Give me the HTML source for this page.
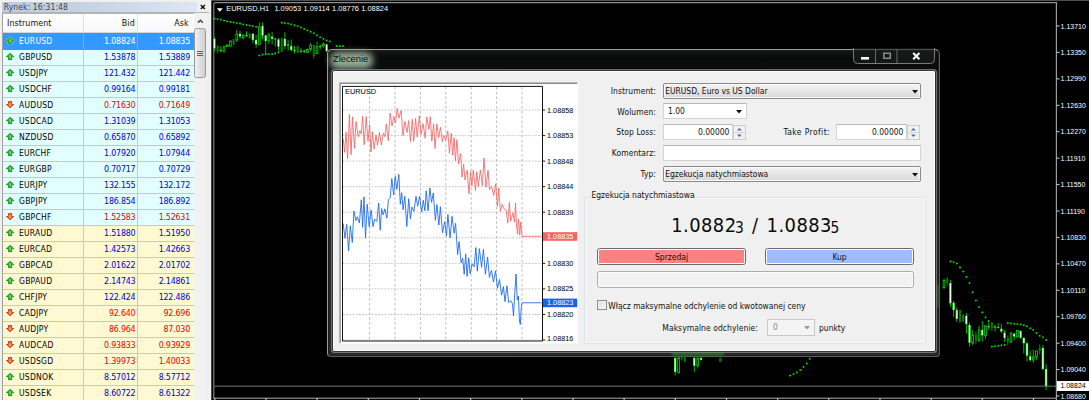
<!DOCTYPE html><html><head><meta charset="utf-8"><title>Zlecenie</title><style>html,body{margin:0;padding:0;background:#000;}
body{width:1089px;height:400px;overflow:hidden;position:relative;font-family:"DejaVu Sans Condensed","Liberation Sans",sans-serif;}
#root{position:absolute;left:0;top:0;width:1089px;height:400px;overflow:hidden;background:#000;}
#root div, #root span{box-sizing:border-box;}
/* market watch */
#mw{position:absolute;left:0;top:0;width:212px;height:400px;background:#f0f0f0;}
#mwtitle{position:absolute;left:2px;top:1.6px;width:195px;height:10.2px;background:linear-gradient(90deg,#bccbe0 0%,#c6d3e6 45%,#dde7f4 100%);font-size:8.5px;letter-spacing:0.1px;line-height:10.8px;color:#404448;padding-left:1.8px;white-space:nowrap;}
#mwx{position:absolute;left:199.4px;top:3.2px;}
#mwtable{position:absolute;left:2px;top:13px;width:192px;height:387px;background:#fff;border-left:1px solid #a0a0a0;border-top:1px solid #b4b4b4;overflow:hidden;font-size:8.8px;}
.hdr{position:absolute;left:0;top:0;width:192px;height:19px;background:linear-gradient(#ffffff,#f7f8fa);border-bottom:1px solid #d5d5d5;color:#111;}
.hdr div{position:absolute;top:0;height:18px;line-height:19.4px;border-right:1px solid #e0e0e0;}
.row{position:absolute;left:0;width:192px;height:16px;border-bottom:1px solid #c8c8c8;color:#0000e0;}
.row div{position:absolute;top:0;height:15px;line-height:15.4px;border-right:1px solid #c8c8c8;white-space:nowrap;}
.c1{left:0;width:81px;padding-left:4px;text-align:left;}
.c2{left:81px;width:54px;text-align:right;padding-right:1.6px;letter-spacing:-0.2px;}
.c3{left:135px;width:57px;text-align:right;padding-right:5px;letter-spacing:-0.2px;border-right:none !important;}
.hdr .c2{letter-spacing:0.15px;padding-right:2.2px;}.hdr .c3{letter-spacing:0.1px;padding-right:6.4px;}.hdr .c1{letter-spacing:0.1px;}
.row .c1{color:#000;}
.row .c1 span{position:absolute;left:16px;top:0;font-size:8.5px;letter-spacing:0.22px;}
.row.sel{background:#3399ff;color:#fff;border-bottom-color:#3399ff;box-shadow:0 -1px 0 #3399ff;}
.row.sel .c1{color:#fff;}
.row.sel div{border-right-color:#6ab2ff;}
.row.cy{background:#e2ffff;}
.row.ye{background:#fff9d2;}
.row.dn{color:#f00000;}
.ar{position:absolute;left:3.3px;top:3.4px;width:8.2px;height:7.2px;overflow:visible;}
/* chart */
#chart{position:absolute;left:0;top:0;width:1089px;height:400px;font-family:"Liberation Sans",sans-serif;}
#chsvg{position:absolute;left:0;top:0;}
.chtitle{position:absolute;color:#fff;font-size:7.42px;line-height:10px;white-space:pre;word-spacing:0.3px;}
.pl{position:absolute;left:1060.6px;width:28px;color:#fff;font-size:7px;line-height:9px;white-space:nowrap;}
.plbox{position:absolute;left:1057px;width:32px;height:9.5px;background:#fff;color:#000;font-size:7px;line-height:9.5px;padding-left:3.4px;white-space:nowrap;}
/* dialog */
#dlg{position:absolute;left:0;top:0;width:1089px;height:400px;font-size:8.45px;color:#111;}
#dlgframe{position:absolute;left:327px;top:48.6px;width:613px;height:308px;border-radius:5px 5px 4px 4px;background:linear-gradient(180deg,#141616 0px,#090b0b 8px,#0b0d0d 20px,#2a2a2a 24px,#2a2a2a 100%);border:1px solid #9a9a9a;border-right-color:#5c5c5c;border-bottom-color:#5c5c5c;box-shadow:inset 0 0 0 1px #1c1c1c;}
#dlgtitle{position:absolute;left:333px;top:53px;font-family:"Liberation Sans",sans-serif;font-size:9.3px;line-height:12px;color:#0a0a0a;white-space:nowrap;}
#client{position:absolute;left:333px;top:70.8px;width:602px;height:280px;background:#f0f0f0;border:1px solid #fcfcfc;box-shadow:0 0 0 0.8px #1a1a1a,0 0 0 1.7px #8e8e8e;border-radius:1px;}
.ml{position:absolute;left:547px;font-family:"Liberation Sans",sans-serif;font-size:7.3px;line-height:9px;color:#000;white-space:nowrap;}
.ml.w{color:#fff;}
.lab{position:absolute;text-align:right;line-height:12px;white-space:nowrap;letter-spacing:0.08px;}
.lab.tp{letter-spacing:0.42px;}
.lab2{position:absolute;line-height:12px;white-space:nowrap;}
.combo{position:absolute;border:1px solid #8a8a8a;border-radius:2px;background:linear-gradient(#f4f4f4,#e6e6e6 50%,#d8d8d8);box-shadow:inset 0 0 0 1px #fafafa;}
.combo span,.edit span{position:absolute;top:0;line-height:14px;white-space:nowrap;}
.combo span{left:1.2px;}
.dd{position:absolute;right:2px;top:6px;}
.edit{position:absolute;border:1px solid #d4d4d4;border-top-color:#b8b8b8;background:#fff;}
.edit.disd{background:#f4f4f4;border-color:#c8c8c8;}
.edit .dd{right:3.6px;top:6px;}
.spin{display:block;}
#grp{position:absolute;left:584px;top:196.5px;width:342px;height:147px;border:1px solid #dbe5e8;border-radius:3px;box-shadow:inset 0 0 0 1px #f8f8f8;}
.pr{position:absolute;top:211px;height:28px;line-height:28px;text-align:center;white-space:pre;color:#0a0a0a;}
.pr.big{font-size:19.9px;letter-spacing:0.45px;top:212px;}
.pr.sm{font-size:15.4px;top:213.6px;}
.btn{position:absolute;border:1px solid #6c6c6c;border-radius:2.5px;padding:1px;background:#fbfbfb;}
.btn .bi{width:100%;height:100%;text-align:center;line-height:14px;white-space:nowrap;}
.btn.dis{border-color:#adadad;}
#chk{position:absolute;left:596.5px;top:300px;width:10px;height:10px;border:1px solid #8e8e8e;background:linear-gradient(135deg,#d8d8d8,#fafafa);box-shadow:inset 0 0 0 1px #f0f0f0;}

#glow{position:absolute;left:330px;top:52px;width:43px;height:17px;border-radius:8px;background:#a4bea4;filter:blur(3.5px);opacity:0.9;}
</style></head><body>
<div id="root">
<div id="mw">
<div id="mwtitle"><span>Rynek: 16:31:48</span></div><svg id="mwx" width="8" height="8" viewBox="0 0 8 8"><path d="M1.8 1.9L5.9 5.9M5.9 1.9L1.8 5.9" stroke="#111" stroke-width="1.45"/></svg>
<div id="mwtable">
<div class="hdr"><div class="c1">Instrument</div><div class="c2">Bid</div><div class="c3">Ask</div></div>
<div class="row sel" style="top:20px"><div class="c1"><svg class="ar" viewBox="0 0 9 8"><path d="M4.5 0.4 L8.6 4.1 H6.3 V7.4 H2.7 V4.1 H0.4 Z" fill="none" stroke="#e8fbe8" stroke-width="1.5" stroke-linejoin="round"/><path d="M4.5 0.4 L8.6 4.1 H6.3 V7.4 H2.7 V4.1 H0.4 Z" fill="#25b825" stroke="#0b760b" stroke-width="0.8"/><path d="M4.5 1.8L6.6 3.8H5.4V6.4H3.8V3.8H2.4Z" fill="#5fdc5f"/></svg><span>EURUSD</span></div><div class="c2">1.08824</div><div class="c3">1.08835</div></div>
<div class="row cy" style="top:36px"><div class="c1"><svg class="ar" viewBox="0 0 9 8"><path d="M4.5 0.4 L8.6 4.1 H6.3 V7.4 H2.7 V4.1 H0.4 Z" fill="none" stroke="#e8fbe8" stroke-width="1.5" stroke-linejoin="round"/><path d="M4.5 0.4 L8.6 4.1 H6.3 V7.4 H2.7 V4.1 H0.4 Z" fill="#25b825" stroke="#0b760b" stroke-width="0.8"/><path d="M4.5 1.8L6.6 3.8H5.4V6.4H3.8V3.8H2.4Z" fill="#5fdc5f"/></svg><span>GBPUSD</span></div><div class="c2">1.53878</div><div class="c3">1.53889</div></div>
<div class="row cy" style="top:52px"><div class="c1"><svg class="ar" viewBox="0 0 9 8"><path d="M4.5 0.4 L8.6 4.1 H6.3 V7.4 H2.7 V4.1 H0.4 Z" fill="none" stroke="#e8fbe8" stroke-width="1.5" stroke-linejoin="round"/><path d="M4.5 0.4 L8.6 4.1 H6.3 V7.4 H2.7 V4.1 H0.4 Z" fill="#25b825" stroke="#0b760b" stroke-width="0.8"/><path d="M4.5 1.8L6.6 3.8H5.4V6.4H3.8V3.8H2.4Z" fill="#5fdc5f"/></svg><span>USDJPY</span></div><div class="c2">121.432</div><div class="c3">121.442</div></div>
<div class="row cy" style="top:68px"><div class="c1"><svg class="ar" viewBox="0 0 9 8"><path d="M4.5 0.4 L8.6 4.1 H6.3 V7.4 H2.7 V4.1 H0.4 Z" fill="none" stroke="#e8fbe8" stroke-width="1.5" stroke-linejoin="round"/><path d="M4.5 0.4 L8.6 4.1 H6.3 V7.4 H2.7 V4.1 H0.4 Z" fill="#25b825" stroke="#0b760b" stroke-width="0.8"/><path d="M4.5 1.8L6.6 3.8H5.4V6.4H3.8V3.8H2.4Z" fill="#5fdc5f"/></svg><span>USDCHF</span></div><div class="c2">0.99164</div><div class="c3">0.99181</div></div>
<div class="row cy dn" style="top:84px"><div class="c1"><svg class="ar" viewBox="0 0 9 8" style="transform:rotate(180deg)"><path d="M4.5 0.4 L8.6 4.1 H6.3 V7.4 H2.7 V4.1 H0.4 Z" fill="none" stroke="#fff0e8" stroke-width="1.5" stroke-linejoin="round"/><path d="M4.5 0.4 L8.6 4.1 H6.3 V7.4 H2.7 V4.1 H0.4 Z" fill="#e85a2a" stroke="#a82c0c" stroke-width="0.8"/><path d="M4.5 1.8L6.6 3.8H5.4V6.4H3.8V3.8H2.4Z" fill="#ffa070"/></svg><span>AUDUSD</span></div><div class="c2">0.71630</div><div class="c3">0.71649</div></div>
<div class="row cy" style="top:100px"><div class="c1"><svg class="ar" viewBox="0 0 9 8"><path d="M4.5 0.4 L8.6 4.1 H6.3 V7.4 H2.7 V4.1 H0.4 Z" fill="none" stroke="#e8fbe8" stroke-width="1.5" stroke-linejoin="round"/><path d="M4.5 0.4 L8.6 4.1 H6.3 V7.4 H2.7 V4.1 H0.4 Z" fill="#25b825" stroke="#0b760b" stroke-width="0.8"/><path d="M4.5 1.8L6.6 3.8H5.4V6.4H3.8V3.8H2.4Z" fill="#5fdc5f"/></svg><span>USDCAD</span></div><div class="c2">1.31039</div><div class="c3">1.31053</div></div>
<div class="row cy" style="top:116px"><div class="c1"><svg class="ar" viewBox="0 0 9 8"><path d="M4.5 0.4 L8.6 4.1 H6.3 V7.4 H2.7 V4.1 H0.4 Z" fill="none" stroke="#e8fbe8" stroke-width="1.5" stroke-linejoin="round"/><path d="M4.5 0.4 L8.6 4.1 H6.3 V7.4 H2.7 V4.1 H0.4 Z" fill="#25b825" stroke="#0b760b" stroke-width="0.8"/><path d="M4.5 1.8L6.6 3.8H5.4V6.4H3.8V3.8H2.4Z" fill="#5fdc5f"/></svg><span>NZDUSD</span></div><div class="c2">0.65870</div><div class="c3">0.65892</div></div>
<div class="row cy" style="top:132px"><div class="c1"><svg class="ar" viewBox="0 0 9 8"><path d="M4.5 0.4 L8.6 4.1 H6.3 V7.4 H2.7 V4.1 H0.4 Z" fill="none" stroke="#e8fbe8" stroke-width="1.5" stroke-linejoin="round"/><path d="M4.5 0.4 L8.6 4.1 H6.3 V7.4 H2.7 V4.1 H0.4 Z" fill="#25b825" stroke="#0b760b" stroke-width="0.8"/><path d="M4.5 1.8L6.6 3.8H5.4V6.4H3.8V3.8H2.4Z" fill="#5fdc5f"/></svg><span>EURCHF</span></div><div class="c2">1.07920</div><div class="c3">1.07944</div></div>
<div class="row cy" style="top:148px"><div class="c1"><svg class="ar" viewBox="0 0 9 8"><path d="M4.5 0.4 L8.6 4.1 H6.3 V7.4 H2.7 V4.1 H0.4 Z" fill="none" stroke="#e8fbe8" stroke-width="1.5" stroke-linejoin="round"/><path d="M4.5 0.4 L8.6 4.1 H6.3 V7.4 H2.7 V4.1 H0.4 Z" fill="#25b825" stroke="#0b760b" stroke-width="0.8"/><path d="M4.5 1.8L6.6 3.8H5.4V6.4H3.8V3.8H2.4Z" fill="#5fdc5f"/></svg><span>EURGBP</span></div><div class="c2">0.70717</div><div class="c3">0.70729</div></div>
<div class="row cy" style="top:164px"><div class="c1"><svg class="ar" viewBox="0 0 9 8"><path d="M4.5 0.4 L8.6 4.1 H6.3 V7.4 H2.7 V4.1 H0.4 Z" fill="none" stroke="#e8fbe8" stroke-width="1.5" stroke-linejoin="round"/><path d="M4.5 0.4 L8.6 4.1 H6.3 V7.4 H2.7 V4.1 H0.4 Z" fill="#25b825" stroke="#0b760b" stroke-width="0.8"/><path d="M4.5 1.8L6.6 3.8H5.4V6.4H3.8V3.8H2.4Z" fill="#5fdc5f"/></svg><span>EURJPY</span></div><div class="c2">132.155</div><div class="c3">132.172</div></div>
<div class="row cy" style="top:180px"><div class="c1"><svg class="ar" viewBox="0 0 9 8"><path d="M4.5 0.4 L8.6 4.1 H6.3 V7.4 H2.7 V4.1 H0.4 Z" fill="none" stroke="#e8fbe8" stroke-width="1.5" stroke-linejoin="round"/><path d="M4.5 0.4 L8.6 4.1 H6.3 V7.4 H2.7 V4.1 H0.4 Z" fill="#25b825" stroke="#0b760b" stroke-width="0.8"/><path d="M4.5 1.8L6.6 3.8H5.4V6.4H3.8V3.8H2.4Z" fill="#5fdc5f"/></svg><span>GBPJPY</span></div><div class="c2">186.854</div><div class="c3">186.892</div></div>
<div class="row cy dn" style="top:196px"><div class="c1"><svg class="ar" viewBox="0 0 9 8" style="transform:rotate(180deg)"><path d="M4.5 0.4 L8.6 4.1 H6.3 V7.4 H2.7 V4.1 H0.4 Z" fill="none" stroke="#fff0e8" stroke-width="1.5" stroke-linejoin="round"/><path d="M4.5 0.4 L8.6 4.1 H6.3 V7.4 H2.7 V4.1 H0.4 Z" fill="#e85a2a" stroke="#a82c0c" stroke-width="0.8"/><path d="M4.5 1.8L6.6 3.8H5.4V6.4H3.8V3.8H2.4Z" fill="#ffa070"/></svg><span>GBPCHF</span></div><div class="c2">1.52583</div><div class="c3">1.52631</div></div>
<div class="row ye" style="top:212px"><div class="c1"><svg class="ar" viewBox="0 0 9 8"><path d="M4.5 0.4 L8.6 4.1 H6.3 V7.4 H2.7 V4.1 H0.4 Z" fill="none" stroke="#e8fbe8" stroke-width="1.5" stroke-linejoin="round"/><path d="M4.5 0.4 L8.6 4.1 H6.3 V7.4 H2.7 V4.1 H0.4 Z" fill="#25b825" stroke="#0b760b" stroke-width="0.8"/><path d="M4.5 1.8L6.6 3.8H5.4V6.4H3.8V3.8H2.4Z" fill="#5fdc5f"/></svg><span>EURAUD</span></div><div class="c2">1.51880</div><div class="c3">1.51950</div></div>
<div class="row ye" style="top:228px"><div class="c1"><svg class="ar" viewBox="0 0 9 8"><path d="M4.5 0.4 L8.6 4.1 H6.3 V7.4 H2.7 V4.1 H0.4 Z" fill="none" stroke="#e8fbe8" stroke-width="1.5" stroke-linejoin="round"/><path d="M4.5 0.4 L8.6 4.1 H6.3 V7.4 H2.7 V4.1 H0.4 Z" fill="#25b825" stroke="#0b760b" stroke-width="0.8"/><path d="M4.5 1.8L6.6 3.8H5.4V6.4H3.8V3.8H2.4Z" fill="#5fdc5f"/></svg><span>EURCAD</span></div><div class="c2">1.42573</div><div class="c3">1.42663</div></div>
<div class="row ye" style="top:244px"><div class="c1"><svg class="ar" viewBox="0 0 9 8"><path d="M4.5 0.4 L8.6 4.1 H6.3 V7.4 H2.7 V4.1 H0.4 Z" fill="none" stroke="#e8fbe8" stroke-width="1.5" stroke-linejoin="round"/><path d="M4.5 0.4 L8.6 4.1 H6.3 V7.4 H2.7 V4.1 H0.4 Z" fill="#25b825" stroke="#0b760b" stroke-width="0.8"/><path d="M4.5 1.8L6.6 3.8H5.4V6.4H3.8V3.8H2.4Z" fill="#5fdc5f"/></svg><span>GBPCAD</span></div><div class="c2">2.01622</div><div class="c3">2.01702</div></div>
<div class="row ye" style="top:260px"><div class="c1"><svg class="ar" viewBox="0 0 9 8"><path d="M4.5 0.4 L8.6 4.1 H6.3 V7.4 H2.7 V4.1 H0.4 Z" fill="none" stroke="#e8fbe8" stroke-width="1.5" stroke-linejoin="round"/><path d="M4.5 0.4 L8.6 4.1 H6.3 V7.4 H2.7 V4.1 H0.4 Z" fill="#25b825" stroke="#0b760b" stroke-width="0.8"/><path d="M4.5 1.8L6.6 3.8H5.4V6.4H3.8V3.8H2.4Z" fill="#5fdc5f"/></svg><span>GBPAUD</span></div><div class="c2">2.14743</div><div class="c3">2.14861</div></div>
<div class="row ye" style="top:276px"><div class="c1"><svg class="ar" viewBox="0 0 9 8"><path d="M4.5 0.4 L8.6 4.1 H6.3 V7.4 H2.7 V4.1 H0.4 Z" fill="none" stroke="#e8fbe8" stroke-width="1.5" stroke-linejoin="round"/><path d="M4.5 0.4 L8.6 4.1 H6.3 V7.4 H2.7 V4.1 H0.4 Z" fill="#25b825" stroke="#0b760b" stroke-width="0.8"/><path d="M4.5 1.8L6.6 3.8H5.4V6.4H3.8V3.8H2.4Z" fill="#5fdc5f"/></svg><span>CHFJPY</span></div><div class="c2">122.424</div><div class="c3">122.486</div></div>
<div class="row ye dn" style="top:292px"><div class="c1"><svg class="ar" viewBox="0 0 9 8" style="transform:rotate(180deg)"><path d="M4.5 0.4 L8.6 4.1 H6.3 V7.4 H2.7 V4.1 H0.4 Z" fill="none" stroke="#fff0e8" stroke-width="1.5" stroke-linejoin="round"/><path d="M4.5 0.4 L8.6 4.1 H6.3 V7.4 H2.7 V4.1 H0.4 Z" fill="#e85a2a" stroke="#a82c0c" stroke-width="0.8"/><path d="M4.5 1.8L6.6 3.8H5.4V6.4H3.8V3.8H2.4Z" fill="#ffa070"/></svg><span>CADJPY</span></div><div class="c2">92.640</div><div class="c3">92.696</div></div>
<div class="row ye dn" style="top:308px"><div class="c1"><svg class="ar" viewBox="0 0 9 8" style="transform:rotate(180deg)"><path d="M4.5 0.4 L8.6 4.1 H6.3 V7.4 H2.7 V4.1 H0.4 Z" fill="none" stroke="#fff0e8" stroke-width="1.5" stroke-linejoin="round"/><path d="M4.5 0.4 L8.6 4.1 H6.3 V7.4 H2.7 V4.1 H0.4 Z" fill="#e85a2a" stroke="#a82c0c" stroke-width="0.8"/><path d="M4.5 1.8L6.6 3.8H5.4V6.4H3.8V3.8H2.4Z" fill="#ffa070"/></svg><span>AUDJPY</span></div><div class="c2">86.964</div><div class="c3">87.030</div></div>
<div class="row ye dn" style="top:324px"><div class="c1"><svg class="ar" viewBox="0 0 9 8" style="transform:rotate(180deg)"><path d="M4.5 0.4 L8.6 4.1 H6.3 V7.4 H2.7 V4.1 H0.4 Z" fill="none" stroke="#fff0e8" stroke-width="1.5" stroke-linejoin="round"/><path d="M4.5 0.4 L8.6 4.1 H6.3 V7.4 H2.7 V4.1 H0.4 Z" fill="#e85a2a" stroke="#a82c0c" stroke-width="0.8"/><path d="M4.5 1.8L6.6 3.8H5.4V6.4H3.8V3.8H2.4Z" fill="#ffa070"/></svg><span>AUDCAD</span></div><div class="c2">0.93833</div><div class="c3">0.93929</div></div>
<div class="row ye dn" style="top:340px"><div class="c1"><svg class="ar" viewBox="0 0 9 8" style="transform:rotate(180deg)"><path d="M4.5 0.4 L8.6 4.1 H6.3 V7.4 H2.7 V4.1 H0.4 Z" fill="none" stroke="#fff0e8" stroke-width="1.5" stroke-linejoin="round"/><path d="M4.5 0.4 L8.6 4.1 H6.3 V7.4 H2.7 V4.1 H0.4 Z" fill="#e85a2a" stroke="#a82c0c" stroke-width="0.8"/><path d="M4.5 1.8L6.6 3.8H5.4V6.4H3.8V3.8H2.4Z" fill="#ffa070"/></svg><span>USDSGD</span></div><div class="c2">1.39973</div><div class="c3">1.40033</div></div>
<div class="row ye" style="top:356px"><div class="c1"><svg class="ar" viewBox="0 0 9 8"><path d="M4.5 0.4 L8.6 4.1 H6.3 V7.4 H2.7 V4.1 H0.4 Z" fill="none" stroke="#e8fbe8" stroke-width="1.5" stroke-linejoin="round"/><path d="M4.5 0.4 L8.6 4.1 H6.3 V7.4 H2.7 V4.1 H0.4 Z" fill="#25b825" stroke="#0b760b" stroke-width="0.8"/><path d="M4.5 1.8L6.6 3.8H5.4V6.4H3.8V3.8H2.4Z" fill="#5fdc5f"/></svg><span>USDNOK</span></div><div class="c2">8.57012</div><div class="c3">8.57712</div></div>
<div class="row ye" style="top:372px"><div class="c1"><svg class="ar" viewBox="0 0 9 8"><path d="M4.5 0.4 L8.6 4.1 H6.3 V7.4 H2.7 V4.1 H0.4 Z" fill="none" stroke="#e8fbe8" stroke-width="1.5" stroke-linejoin="round"/><path d="M4.5 0.4 L8.6 4.1 H6.3 V7.4 H2.7 V4.1 H0.4 Z" fill="#25b825" stroke="#0b760b" stroke-width="0.8"/><path d="M4.5 1.8L6.6 3.8H5.4V6.4H3.8V3.8H2.4Z" fill="#5fdc5f"/></svg><span>USDSEK</span></div><div class="c2">8.60722</div><div class="c3">8.61322</div></div>
</div>
<div style="position:absolute;left:2px;top:12.3px;width:206.5px;height:1px;background:#b4b4b4"></div><div id="sb" style="position:absolute;left:194px;top:14px;width:12px;height:386px;background:#f2f2f2;">
<svg width="12" height="386" style="position:absolute;left:0;top:0">
<path d="M4 8.6 L6.4 6.2 L8.8 8.6" fill="none" stroke="#484848" stroke-width="1.5"/>
<defs><linearGradient id="tg" x1="0" x2="1" y1="0" y2="0"><stop offset="0" stop-color="#f4f4f4"/><stop offset="0.5" stop-color="#e0e0e0"/><stop offset="1" stop-color="#cfcfcf"/></linearGradient></defs>
<rect x="0.5" y="14.6" width="11" height="49" rx="2" fill="url(#tg)" stroke="#9a9a9a"/>
<path d="M3 37.5H9M3 39.5H9M3 41.5H9" stroke="#606060" stroke-width="1"/>
</svg>
</div>

</div>
<div id="chart">
<svg id="chsvg" width="1089" height="400" viewBox="0 0 1089 400">
<rect x="211.3" y="0" width="878" height="400" fill="#000"/>
<rect x="211" y="0" width="878" height="0.9" fill="#585858"/>
<path d="M213.8 398.2V4.2Q213.8 2.6 215.4 2.6H1056.4" fill="none" stroke="#8a8a8a" stroke-width="1.1"/>
<path d="M213.3 398.2H1056.5" stroke="#b0b0b0" stroke-width="1"/>
<path d="M1056.4 2.1V400" stroke="#9c9c9c" stroke-width="1.2"/>
<path d="M1033.5 398V400M982.3 398V400M931.2 398V400M880.0 398V400M828.8 398V400M777.7 398V400M726.5 398V400M675.3 398V400M624.1 398V400M573.0 398V400M521.8 398V400M470.6 398V400M419.5 398V400M368.3 398V400M317.1 398V400M266.0 398V400M214.8 398V400" stroke="#c0c0c0" stroke-width="1.2"/>
<path d="M1056.5 26.0h3M1056.5 52.4h3M1056.5 78.9h3M1056.5 105.3h3M1056.5 131.7h3M1056.5 158.2h3M1056.5 184.6h3M1056.5 211.0h3M1056.5 237.4h3M1056.5 263.9h3M1056.5 290.3h3M1056.5 316.7h3M1056.5 343.2h3M1056.5 369.6h3M1056.5 396.0h3" stroke="#d0d0d0" stroke-width="1"/>
<path d="M214.5 386.2H1056" stroke="#6a7684" stroke-width="1"/>
<path d="M944.0 279.0V289.0" stroke="#00c800" stroke-width="0.9"/><rect x="943.1" y="280.6" width="1.8" height="7.0" fill="#001000" stroke="#00d800" stroke-width="0.8"/>
<path d="M947.2 277.0V286.0" stroke="#00a000" stroke-width="0.9"/><rect x="946.2" y="279.0" width="2.0" height="4.0" fill="#008000"/>
<path d="M950.4 280.0V306.7" stroke="#00d000" stroke-width="0.9"/><rect x="949.2" y="283.0" width="2.4" height="20.4" fill="#22e022"/><rect x="949.8" y="283.3" width="1.2" height="19.8" fill="#dcffdc"/>
<path d="M953.6 301.0V317.0" stroke="#00d000" stroke-width="0.9"/><rect x="952.4" y="302.8" width="2.4" height="7.2" fill="#22e022"/><rect x="953.0" y="303.1" width="1.2" height="6.6" fill="#dcffdc"/>
<path d="M956.8 307.3V322.0" stroke="#00d000" stroke-width="0.9"/><rect x="955.6" y="310.0" width="2.4" height="9.0" fill="#22e022"/><rect x="956.2" y="310.3" width="1.2" height="8.4" fill="#dcffdc"/>
<path d="M960.0 309.5V323.0" stroke="#00a000" stroke-width="0.9"/><rect x="959.0" y="310.0" width="2.0" height="11.4" fill="#008000"/>
<path d="M963.2 314.0V322.5" stroke="#00a000" stroke-width="0.9"/><rect x="962.2" y="315.0" width="2.0" height="6.0" fill="#008000"/>
<path d="M966.4 313.0V333.7" stroke="#00d000" stroke-width="0.9"/><rect x="965.1" y="315.7" width="2.4" height="8.3" fill="#22e022"/><rect x="965.8" y="316.0" width="1.2" height="7.7" fill="#dcffdc"/>
<path d="M969.5 322.5V346.7" stroke="#00d000" stroke-width="0.9"/><rect x="968.3" y="325.0" width="2.4" height="17.7" fill="#22e022"/><rect x="968.9" y="325.3" width="1.2" height="17.1" fill="#dcffdc"/>
<path d="M972.7 330.0V345.0" stroke="#00c800" stroke-width="0.9"/><rect x="971.8" y="335.0" width="1.8" height="8.0" fill="#001000" stroke="#00d800" stroke-width="0.8"/>
<path d="M975.9 331.5V344.0" stroke="#00a000" stroke-width="0.9"/><rect x="974.9" y="335.0" width="2.0" height="5.5" fill="#008000"/>
<path d="M979.1 326.0V341.6" stroke="#00c800" stroke-width="0.9"/><rect x="978.2" y="329.8" width="1.8" height="10.7" fill="#001000" stroke="#00d800" stroke-width="0.8"/>
<path d="M982.3 321.0V341.6" stroke="#00d000" stroke-width="0.9"/><rect x="981.1" y="330.0" width="2.4" height="5.4" fill="#22e022"/><rect x="981.7" y="330.3" width="1.2" height="4.8" fill="#dcffdc"/>
<path d="M985.5 325.0V339.0" stroke="#00c800" stroke-width="0.9"/><rect x="984.6" y="326.0" width="1.8" height="9.4" fill="#001000" stroke="#00d800" stroke-width="0.8"/>
<path d="M988.7 322.5V329.8" stroke="#00d000" stroke-width="0.9"/><rect x="987.5" y="326.0" width="2.4" height="0.9" fill="#22e022"/><rect x="988.1" y="326.3" width="1.2" height="0.3" fill="#dcffdc"/>
<path d="M991.9 322.0V331.0" stroke="#00a000" stroke-width="0.9"/><rect x="990.9" y="322.5" width="2.0" height="5.5" fill="#008000"/>
<path d="M995.1 325.0V331.5" stroke="#00d000" stroke-width="0.9"/><rect x="993.9" y="326.6" width="2.4" height="0.9" fill="#22e022"/><rect x="994.5" y="326.9" width="1.2" height="0.3" fill="#dcffdc"/>
<path d="M998.2 323.0V328.7" stroke="#00d000" stroke-width="0.9"/><rect x="997.0" y="327.0" width="2.4" height="0.9" fill="#22e022"/><rect x="997.6" y="327.3" width="1.2" height="0.3" fill="#dcffdc"/>
<path d="M1001.4 324.0V333.0" stroke="#00d000" stroke-width="0.9"/><rect x="1000.2" y="328.7" width="2.4" height="2.8" fill="#22e022"/><rect x="1000.8" y="329.0" width="1.2" height="2.2" fill="#dcffdc"/>
<path d="M1004.6 330.0V341.6" stroke="#00d000" stroke-width="0.9"/><rect x="1003.4" y="332.6" width="2.4" height="5.4" fill="#22e022"/><rect x="1004.0" y="332.9" width="1.2" height="4.8" fill="#dcffdc"/>
<path d="M1007.8 335.4V345.0" stroke="#00a000" stroke-width="0.9"/><rect x="1006.8" y="338.0" width="2.0" height="3.6" fill="#008000"/>
<path d="M1011.0 332.0V343.0" stroke="#00c800" stroke-width="0.9"/><rect x="1010.1" y="333.0" width="1.8" height="9.0" fill="#001000" stroke="#00d800" stroke-width="0.8"/>
<path d="M1014.2 333.0V340.0" stroke="#00d000" stroke-width="0.9"/><rect x="1013.0" y="333.7" width="2.4" height="2.8" fill="#22e022"/><rect x="1013.6" y="334.0" width="1.2" height="2.2" fill="#dcffdc"/>
<path d="M1017.4 329.8V337.7" stroke="#00c800" stroke-width="0.9"/><rect x="1016.5" y="330.4" width="1.8" height="6.6" fill="#001000" stroke="#00d800" stroke-width="0.8"/>
<path d="M1020.6 330.4V338.8" stroke="#00d000" stroke-width="0.9"/><rect x="1019.4" y="331.0" width="2.4" height="6.7" fill="#22e022"/><rect x="1020.0" y="331.3" width="1.2" height="6.1" fill="#dcffdc"/>
<path d="M1023.8 337.0V353.5" stroke="#00d000" stroke-width="0.9"/><rect x="1022.6" y="338.0" width="2.4" height="5.3" fill="#22e022"/><rect x="1023.2" y="338.3" width="1.2" height="4.7" fill="#dcffdc"/>
<path d="M1027.0 342.0V361.4" stroke="#00d000" stroke-width="0.9"/><rect x="1025.8" y="343.4" width="2.4" height="12.3" fill="#22e022"/><rect x="1026.4" y="343.7" width="1.2" height="11.7" fill="#dcffdc"/>
<path d="M1030.2 350.7V361.4" stroke="#00d000" stroke-width="0.9"/><rect x="1029.0" y="356.3" width="2.4" height="3.9" fill="#22e022"/><rect x="1029.6" y="356.6" width="1.2" height="3.3" fill="#dcffdc"/>
<path d="M1033.3 349.6V363.0" stroke="#00c800" stroke-width="0.9"/><rect x="1032.4" y="357.0" width="1.8" height="3.0" fill="#001000" stroke="#00d800" stroke-width="0.8"/>
<path d="M1036.5 350.7V359.7" stroke="#00c800" stroke-width="0.9"/><rect x="1035.6" y="351.0" width="1.8" height="5.3" fill="#001000" stroke="#00d800" stroke-width="0.8"/>
<path d="M1039.7 344.5V354.6" stroke="#00a000" stroke-width="0.9"/><rect x="1038.7" y="348.0" width="2.0" height="3.0" fill="#008000"/>
<path d="M1042.9 345.0V370.4" stroke="#00d000" stroke-width="0.9"/><rect x="1041.7" y="348.0" width="2.4" height="21.0" fill="#22e022"/><rect x="1042.3" y="348.3" width="1.2" height="20.4" fill="#dcffdc"/>
<path d="M1046.1 364.0V390.0" stroke="#00d000" stroke-width="0.9"/><rect x="1044.9" y="369.0" width="2.4" height="17.0" fill="#22e022"/><rect x="1045.5" y="369.3" width="1.2" height="16.4" fill="#dcffdc"/>
<path d="M949.4 261.4h2M950.4 260.4v2" stroke="#00e400" stroke-width="0.9"/>
<path d="M952.6 262.3h2M953.6 261.3v2" stroke="#00e400" stroke-width="0.9"/>
<path d="M955.8 263.5h2M956.8 262.5v2" stroke="#00e400" stroke-width="0.9"/>
<path d="M959.0 267.5h2M960.0 266.5v2" stroke="#00e400" stroke-width="0.9"/>
<path d="M962.2 271.5h2M963.2 270.5v2" stroke="#00e400" stroke-width="0.9"/>
<path d="M965.4 277.0h2M966.4 276.0v2" stroke="#00e400" stroke-width="0.9"/>
<path d="M968.5 283.0h2M969.5 282.0v2" stroke="#00e400" stroke-width="0.9"/>
<path d="M971.7 292.4h2M972.7 291.4v2" stroke="#00e400" stroke-width="0.9"/>
<path d="M974.9 300.5h2M975.9 299.5v2" stroke="#00e400" stroke-width="0.9"/>
<path d="M978.1 307.0h2M979.1 306.0v2" stroke="#00e400" stroke-width="0.9"/>
<path d="M981.3 312.4h2M982.3 311.4v2" stroke="#00e400" stroke-width="0.9"/>
<path d="M984.5 317.4h2M985.5 316.4v2" stroke="#00e400" stroke-width="0.9"/>
<path d="M987.7 321.0h2M988.7 320.0v2" stroke="#00e400" stroke-width="0.9"/>
<path d="M1006.8 323.0h2M1007.8 322.0v2" stroke="#00e400" stroke-width="0.9"/>
<path d="M1010.0 323.6h2M1011.0 322.6v2" stroke="#00e400" stroke-width="0.9"/>
<path d="M1013.2 323.8h2M1014.2 322.8v2" stroke="#00e400" stroke-width="0.9"/>
<path d="M1016.4 324.2h2M1017.4 323.2v2" stroke="#00e400" stroke-width="0.9"/>
<path d="M1019.6 324.4h2M1020.6 323.4v2" stroke="#00e400" stroke-width="0.9"/>
<path d="M1022.8 325.3h2M1023.8 324.3v2" stroke="#00e400" stroke-width="0.9"/>
<path d="M1026.0 326.4h2M1027.0 325.4v2" stroke="#00e400" stroke-width="0.9"/>
<path d="M1029.2 328.3h2M1030.2 327.3v2" stroke="#00e400" stroke-width="0.9"/>
<path d="M1032.3 330.0h2M1033.3 329.0v2" stroke="#00e400" stroke-width="0.9"/>
<path d="M1035.5 333.0h2M1036.5 332.0v2" stroke="#00e400" stroke-width="0.9"/>
<path d="M1038.7 335.8h2M1039.7 334.8v2" stroke="#00e400" stroke-width="0.9"/>
<path d="M1041.9 337.3h2M1042.9 336.3v2" stroke="#00e400" stroke-width="0.9"/>
<path d="M1045.1 340.0h2M1046.1 339.0v2" stroke="#00e400" stroke-width="0.9"/>
<path d="M990.9 346.7h2M991.9 345.7v2" stroke="#00e400" stroke-width="0.9"/>
<path d="M994.1 346.2h2M995.1 345.2v2" stroke="#00e400" stroke-width="0.9"/>
<path d="M997.2 345.8h2M998.2 344.8v2" stroke="#00e400" stroke-width="0.9"/>
<path d="M1000.4 345.3h2M1001.4 344.3v2" stroke="#00e400" stroke-width="0.9"/>
<path d="M1003.6 345.0h2M1004.6 344.0v2" stroke="#00e400" stroke-width="0.9"/>
<path d="M214.4 37.1V51.7" stroke="#00d000" stroke-width="0.9"/><rect x="213.2" y="38.8" width="2.4" height="9.6" fill="#22e022"/><rect x="213.8" y="39.1" width="1.2" height="9.0" fill="#dcffdc"/>
<path d="M217.6 45.0V53.4" stroke="#00a000" stroke-width="0.9"/><rect x="216.6" y="46.1" width="2.0" height="5.6" fill="#008000"/>
<path d="M220.8 46.1V52.3" stroke="#00d000" stroke-width="0.9"/><rect x="219.6" y="50.2" width="2.4" height="0.9" fill="#22e022"/><rect x="220.2" y="50.5" width="1.2" height="0.3" fill="#dcffdc"/>
<path d="M224.0 45.6V52.0" stroke="#00c800" stroke-width="0.9"/><rect x="223.1" y="46.7" width="1.8" height="5.1" fill="#001000" stroke="#00d800" stroke-width="0.8"/>
<path d="M227.2 44.1V47.0" stroke="#00c800" stroke-width="0.9"/><rect x="226.3" y="44.8" width="1.8" height="1.8" fill="#001000" stroke="#00d800" stroke-width="0.8"/>
<path d="M230.4 40.5V47.2" stroke="#00c800" stroke-width="0.9"/><rect x="229.5" y="41.1" width="1.8" height="5.1" fill="#001000" stroke="#00d800" stroke-width="0.8"/>
<path d="M233.6 38.8V45.0" stroke="#00a000" stroke-width="0.9"/><rect x="232.6" y="39.4" width="2.0" height="5.1" fill="#008000"/>
<path d="M236.8 29.8V42.2" stroke="#00c800" stroke-width="0.9"/><rect x="235.9" y="34.3" width="1.8" height="5.6" fill="#001000" stroke="#00d800" stroke-width="0.8"/>
<path d="M240.0 30.9V38.8" stroke="#00d000" stroke-width="0.9"/><rect x="238.8" y="33.7" width="2.4" height="2.8" fill="#22e022"/><rect x="239.4" y="34.0" width="1.2" height="2.2" fill="#dcffdc"/>
<path d="M243.2 34.3V39.4" stroke="#00c800" stroke-width="0.9"/><rect x="242.3" y="35.1" width="1.8" height="2.6" fill="#001000" stroke="#00d800" stroke-width="0.8"/>
<path d="M246.5 31.5V36.9" stroke="#00d000" stroke-width="0.9"/><rect x="245.3" y="35.1" width="2.4" height="0.9" fill="#22e022"/><rect x="245.9" y="35.4" width="1.2" height="0.3" fill="#dcffdc"/>
<path d="M249.7 33.2V38.8" stroke="#00a000" stroke-width="0.9"/><rect x="248.7" y="33.7" width="2.0" height="4.5" fill="#008000"/>
<path d="M252.9 33.2V43.3" stroke="#00d000" stroke-width="0.9"/><rect x="251.7" y="33.7" width="2.4" height="6.2" fill="#22e022"/><rect x="252.3" y="34.0" width="1.2" height="5.6" fill="#dcffdc"/>
<path d="M256.1 34.9V47.8" stroke="#00d000" stroke-width="0.9"/><rect x="254.9" y="39.9" width="2.4" height="4.5" fill="#22e022"/><rect x="255.5" y="40.2" width="1.2" height="3.9" fill="#dcffdc"/>
<path d="M259.3 22.5V45.0" stroke="#00c800" stroke-width="0.9"/><rect x="258.4" y="27.0" width="1.8" height="17.4" fill="#001000" stroke="#00d800" stroke-width="0.8"/>
<path d="M262.5 22.5V39.4" stroke="#00d000" stroke-width="0.9"/><rect x="261.3" y="25.9" width="2.4" height="9.6" fill="#22e022"/><rect x="261.9" y="26.2" width="1.2" height="9.0" fill="#dcffdc"/>
<path d="M265.7 34.9V55.1" stroke="#00d000" stroke-width="0.9"/><rect x="264.5" y="35.4" width="2.4" height="5.6" fill="#22e022"/><rect x="265.1" y="35.7" width="1.2" height="5.0" fill="#dcffdc"/>
<path d="M268.9 32.6V44.4" stroke="#00c800" stroke-width="0.9"/><rect x="268.0" y="34.9" width="1.8" height="6.2" fill="#001000" stroke="#00d800" stroke-width="0.8"/>
<path d="M272.1 32.1V44.4" stroke="#00d000" stroke-width="0.9"/><rect x="270.9" y="36.6" width="2.4" height="2.2" fill="#22e022"/><rect x="271.5" y="36.9" width="1.2" height="1.6" fill="#dcffdc"/>
<path d="M275.3 38.2V46.7" stroke="#00d000" stroke-width="0.9"/><rect x="274.1" y="38.5" width="2.4" height="0.9" fill="#22e022"/><rect x="274.7" y="38.8" width="1.2" height="0.3" fill="#dcffdc"/>
<path d="M278.5 38.2V50.6" stroke="#00d000" stroke-width="0.9"/><rect x="277.3" y="39.4" width="2.4" height="7.3" fill="#22e022"/><rect x="277.9" y="39.7" width="1.2" height="6.7" fill="#dcffdc"/>
<path d="M281.7 38.0V52.3" stroke="#00a000" stroke-width="0.9"/><rect x="280.7" y="38.2" width="2.0" height="13.5" fill="#008000"/>
<path d="M284.9 32.1V49.5" stroke="#00d000" stroke-width="0.9"/><rect x="283.7" y="38.8" width="2.4" height="7.3" fill="#22e022"/><rect x="284.3" y="39.1" width="1.2" height="6.7" fill="#dcffdc"/>
<path d="M288.1 39.9V50.6" stroke="#00d000" stroke-width="0.9"/><rect x="286.9" y="44.5" width="2.4" height="0.9" fill="#22e022"/><rect x="287.5" y="44.8" width="1.2" height="0.3" fill="#dcffdc"/>
<path d="M291.3 39.4V51.2" stroke="#00d000" stroke-width="0.9"/><rect x="290.1" y="46.1" width="2.4" height="3.9" fill="#22e022"/><rect x="290.7" y="46.4" width="1.2" height="3.3" fill="#dcffdc"/>
<path d="M294.5 46.1V53.4" stroke="#00d000" stroke-width="0.9"/><rect x="293.3" y="50.2" width="2.4" height="0.9" fill="#22e022"/><rect x="293.9" y="50.5" width="1.2" height="0.3" fill="#dcffdc"/>
<path d="M297.7 45.6V53.4" stroke="#00a000" stroke-width="0.9"/><rect x="296.7" y="46.1" width="2.0" height="6.7" fill="#008000"/>
<path d="M301.0 47.8V52.9" stroke="#00d000" stroke-width="0.9"/><rect x="299.8" y="50.7" width="2.4" height="0.9" fill="#22e022"/><rect x="300.4" y="51.0" width="1.2" height="0.3" fill="#dcffdc"/>
<path d="M304.2 49.5V53.4" stroke="#00d000" stroke-width="0.9"/><rect x="303.0" y="50.7" width="2.4" height="0.9" fill="#22e022"/><rect x="303.6" y="51.0" width="1.2" height="0.3" fill="#dcffdc"/>
<path d="M307.4 48.4V52.9" stroke="#00c800" stroke-width="0.9"/><rect x="306.5" y="49.5" width="1.8" height="2.8" fill="#001000" stroke="#00d800" stroke-width="0.8"/>
<path d="M310.6 43.3V51.2" stroke="#00c800" stroke-width="0.9"/><rect x="309.7" y="45.6" width="1.8" height="3.4" fill="#001000" stroke="#00d800" stroke-width="0.8"/>
<path d="M313.8 44.8V58.5" stroke="#00a000" stroke-width="0.9"/><rect x="312.8" y="45.0" width="2.0" height="11.2" fill="#008000"/>
<path d="M317.0 41.6V54.0" stroke="#00c800" stroke-width="0.9"/><rect x="316.1" y="46.7" width="1.8" height="6.7" fill="#001000" stroke="#00d800" stroke-width="0.8"/>
<path d="M320.2 44.4V49.5" stroke="#00d000" stroke-width="0.9"/><rect x="319.0" y="46.2" width="2.4" height="0.9" fill="#22e022"/><rect x="319.6" y="46.5" width="1.2" height="0.3" fill="#dcffdc"/>
<path d="M323.4 42.2V47.8" stroke="#00c800" stroke-width="0.9"/><rect x="322.5" y="43.9" width="1.8" height="2.2" fill="#001000" stroke="#00d800" stroke-width="0.8"/>
<path d="M326.6 43.9V52.3" stroke="#00d000" stroke-width="0.9"/><rect x="325.4" y="44.4" width="2.4" height="6.7" fill="#22e022"/><rect x="326.0" y="44.7" width="1.2" height="6.1" fill="#dcffdc"/>
<path d="M675.2 357.0V375.4" stroke="#00d000" stroke-width="0.9"/><rect x="674.0" y="358.0" width="2.4" height="14.0" fill="#22e022"/><rect x="674.6" y="358.3" width="1.2" height="13.4" fill="#dcffdc"/>
<path d="M678.6 357.0V373.5" stroke="#00c800" stroke-width="0.9"/><rect x="677.7" y="358.0" width="1.8" height="14.6" fill="#001000" stroke="#00d800" stroke-width="0.8"/>
<path d="M681.6 357.0V360.5" stroke="#00a000" stroke-width="0.9"/><rect x="680.6" y="357.5" width="2.0" height="1.5" fill="#008000"/>
<path d="M684.7 357.0V362.0" stroke="#00a000" stroke-width="0.9"/><rect x="683.7" y="357.5" width="2.0" height="4.0" fill="#008000"/>
<path d="M694.3 357.0V372.0" stroke="#00d000" stroke-width="0.9"/><rect x="693.1" y="358.0" width="2.4" height="7.8" fill="#22e022"/><rect x="693.7" y="358.3" width="1.2" height="7.2" fill="#dcffdc"/>
<path d="M697.7 357.0V368.6" stroke="#00c800" stroke-width="0.9"/><rect x="696.8" y="358.5" width="1.8" height="7.3" fill="#001000" stroke="#00d800" stroke-width="0.8"/>
<path d="M701.0 357.0V360.5" stroke="#00d000" stroke-width="0.9"/><rect x="699.8" y="358.0" width="2.4" height="2.0" fill="#22e022"/><rect x="700.4" y="358.3" width="1.2" height="1.4" fill="#dcffdc"/>
<path d="M720.2 357.5V362.0" stroke="#00a000" stroke-width="0.9"/><rect x="719.2" y="358.5" width="2.0" height="3.5" fill="#008000"/>
<path d="M213.4 18.6h2M214.4 17.6v2" stroke="#00e400" stroke-width="0.9"/>
<path d="M216.6 19.1h2M217.6 18.1v2" stroke="#00e400" stroke-width="0.9"/>
<path d="M219.8 19.7h2M220.8 18.7v2" stroke="#00e400" stroke-width="0.9"/>
<path d="M223.0 20.5h2M224.0 19.5v2" stroke="#00e400" stroke-width="0.9"/>
<path d="M226.2 21.4h2M227.2 20.4v2" stroke="#00e400" stroke-width="0.9"/>
<path d="M229.4 21.9h2M230.4 20.9v2" stroke="#00e400" stroke-width="0.9"/>
<path d="M232.6 22.5h2M233.6 21.5v2" stroke="#00e400" stroke-width="0.9"/>
<path d="M235.8 23.1h2M236.8 22.1v2" stroke="#00e400" stroke-width="0.9"/>
<path d="M239.0 23.6h2M240.0 22.6v2" stroke="#00e400" stroke-width="0.9"/>
<path d="M242.2 24.4h2M243.2 23.4v2" stroke="#00e400" stroke-width="0.9"/>
<path d="M245.5 25.0h2M246.5 24.0v2" stroke="#00e400" stroke-width="0.9"/>
<path d="M248.7 25.5h2M249.7 24.5v2" stroke="#00e400" stroke-width="0.9"/>
<path d="M251.9 26.1h2M252.9 25.1v2" stroke="#00e400" stroke-width="0.9"/>
<path d="M255.1 26.8h2M256.1 25.8v2" stroke="#00e400" stroke-width="0.9"/>
<path d="M280.7 22.7h2M281.7 21.7v2" stroke="#00e400" stroke-width="0.9"/>
<path d="M283.9 23.1h2M284.9 22.1v2" stroke="#00e400" stroke-width="0.9"/>
<path d="M287.1 23.6h2M288.1 22.6v2" stroke="#00e400" stroke-width="0.9"/>
<path d="M290.3 24.4h2M291.3 23.4v2" stroke="#00e400" stroke-width="0.9"/>
<path d="M293.5 25.3h2M294.5 24.3v2" stroke="#00e400" stroke-width="0.9"/>
<path d="M296.7 26.1h2M297.7 25.1v2" stroke="#00e400" stroke-width="0.9"/>
<path d="M300.0 27.6h2M301.0 26.6v2" stroke="#00e400" stroke-width="0.9"/>
<path d="M303.2 29.0h2M304.2 28.0v2" stroke="#00e400" stroke-width="0.9"/>
<path d="M306.4 30.4h2M307.4 29.4v2" stroke="#00e400" stroke-width="0.9"/>
<path d="M309.6 31.7h2M310.6 30.7v2" stroke="#00e400" stroke-width="0.9"/>
<path d="M312.8 33.2h2M313.8 32.2v2" stroke="#00e400" stroke-width="0.9"/>
<path d="M316.0 35.4h2M317.0 34.4v2" stroke="#00e400" stroke-width="0.9"/>
<path d="M319.2 37.3h2M320.2 36.3v2" stroke="#00e400" stroke-width="0.9"/>
<path d="M322.4 39.0h2M323.4 38.0v2" stroke="#00e400" stroke-width="0.9"/>
<path d="M325.6 40.5h2M326.6 39.5v2" stroke="#00e400" stroke-width="0.9"/>
<path d="M328.8 41.4h2M329.8 40.4v2" stroke="#00e400" stroke-width="0.9"/>
<path d="M258.3 55.5h2M259.3 54.5v2" stroke="#00e400" stroke-width="0.9"/>
<path d="M261.5 54.6h2M262.5 53.6v2" stroke="#00e400" stroke-width="0.9"/>
<path d="M264.7 54.2h2M265.7 53.2v2" stroke="#00e400" stroke-width="0.9"/>
<path d="M267.9 54.2h2M268.9 53.2v2" stroke="#00e400" stroke-width="0.9"/>
<path d="M271.1 54.0h2M272.1 53.0v2" stroke="#00e400" stroke-width="0.9"/>
<path d="M274.3 53.4h2M275.3 52.4v2" stroke="#00e400" stroke-width="0.9"/>
<path d="M277.5 52.3h2M278.5 51.3v2" stroke="#00e400" stroke-width="0.9"/>
<path d="M335.7 46.0h2M336.7 45.0v2" stroke="#00e400" stroke-width="0.9"/>
<path d="M338.8 46.0h2M339.8 45.0v2" stroke="#00e400" stroke-width="0.9"/>
<path d="M341.9 46.0h2M342.9 45.0v2" stroke="#00e400" stroke-width="0.9"/>
<path d="M789.0 375.6h2M790.0 374.6v2" stroke="#00e400" stroke-width="0.9"/>
<path d="M792.5 374.1h2M793.5 373.1v2" stroke="#00e400" stroke-width="0.9"/>
<path d="M795.8 372.4h2M796.8 371.4v2" stroke="#00e400" stroke-width="0.9"/>
<path d="M799.3 370.0h2M800.3 369.0v2" stroke="#00e400" stroke-width="0.9"/>
<path d="M802.5 367.0h2M803.5 366.0v2" stroke="#00e400" stroke-width="0.9"/>
<path d="M805.8 363.5h2M806.8 362.5v2" stroke="#00e400" stroke-width="0.9"/>
<path d="M808.7 358.8h2M809.7 357.8v2" stroke="#00e400" stroke-width="0.9"/>
<path d="M216.8 8.2H222.8L219.8 11.8Z" fill="#fff"/>
</svg>
<div class="chtitle" style="left:226.3px;top:4px">EURUSD,H1</div>
<div class="chtitle" style="left:274.4px;top:4px">1.09053 1.09114 1.08776 1.08824</div>
<div class="pl" style="top:21.5px">1.13710</div>
<div class="pl" style="top:47.9px">1.13350</div>
<div class="pl" style="top:74.4px">1.12990</div>
<div class="pl" style="top:100.8px">1.12630</div>
<div class="pl" style="top:127.2px">1.12270</div>
<div class="pl" style="top:153.7px">1.11910</div>
<div class="pl" style="top:180.1px">1.11550</div>
<div class="pl" style="top:206.5px">1.11190</div>
<div class="pl" style="top:232.9px">1.10830</div>
<div class="pl" style="top:259.4px">1.10470</div>
<div class="pl" style="top:285.8px">1.10110</div>
<div class="pl" style="top:312.2px">1.09760</div>
<div class="pl" style="top:338.7px">1.09400</div>
<div class="pl" style="top:365.1px">1.09040</div>
<div class="pl" style="top:391.5px">1.08680</div>
<div class="plbox" style="top:381.2px">1.08824</div>
</div>
<div id="dlg">
<div id="dlgframe"></div>
<div id="glow"></div>
<div id="dlgtitle">Zlecenie</div>
<svg id="capbtn" width="84" height="18" viewBox="0 0 84 18" style="position:absolute;left:853px;top:48px"><path d="M0.5 0V11.5Q0.5 15.5 4.5 15.5H77.5Q81.5 15.5 81.5 11.5V0" fill="#1e1e1e" fill-opacity="0.6" stroke="#7a7a7a" stroke-width="1"/><path d="M22.5 1V15M44 1V15" stroke="#6a6a6a" stroke-width="1"/><rect x="8" y="9" width="8" height="2.6" fill="#fff"/><rect x="30.8" y="5.3" width="6.5" height="5" fill="none" stroke="#8a8a8a" stroke-width="1.5"/><path d="M60.2 5L66.4 11.2M66.4 5L60.2 11.2" stroke="#fff" stroke-width="2"/></svg>
<div style="position:absolute;left:672px;top:352px;width:52px;height:3.6px;background:#2a7a2a;filter:blur(1.2px);opacity:0.75"></div>
<div style="position:absolute;left:936px;top:284px;width:3.4px;height:24px;background:#2a7a2a;filter:blur(1.2px);opacity:0.6"></div>
<div id="client">
</div>
<svg id="mini" width="242" height="265" viewBox="0 0 242 265" style="position:absolute;left:338px;top:81px;overflow:visible">
<rect x="1" y="1.1" width="238.8" height="261.4" fill="#fff"/>
<path d="M1.4 262.5V1.5H239.8" fill="none" stroke="#bdbdbd" stroke-width="0.9"/>
<path d="M2.25 262V2.4H239.5" fill="none" stroke="#6e6e6e" stroke-width="0.9"/>
<path d="M239.9 1.5V262.6H1.4" fill="none" stroke="#fafafa" stroke-width="0.9"/>
<path d="M184.0 6V260M158.6 6V260M133.2 6V260M107.8 6V260M82.4 6V260M57.0 6V260M31.6 6V260" stroke="#b8b8b8" stroke-width="1" stroke-dasharray="2.4 2.4" fill="none"/>
<path d="M5 29.0H204.5M5 54.6H204.5M5 80.1H204.5M5 105.7H204.5M5 131.2H204.5M5 156.8H204.5M5 182.4H204.5M5 207.9H204.5M5 233.5H204.5M5 259.0H204.5" stroke="#c0c0c0" stroke-width="1" stroke-dasharray="1.6 1.6" fill="none"/>
<g transform="translate(2 2)"><path d="M3.2 55.8 L4.6 69.3 L6.0 48.9 L7.6 75.6 L9.4 31.3 L11.1 71.7 L12.5 33.9 L14.5 65.4 L16.0 38.5 L18.2 53.7 L19.8 47.5 L21.2 51.0 L22.7 33.3 L24.1 61.7 L26.2 33.6 L28.0 58.2 L29.6 41.4 L31.0 69.1 L32.5 48.8 L34.1 66.2 L36.0 51.9 L37.5 62.4 L39.5 49.5 L41.3 61.9 L43.4 49.9 L44.9 53.8 L46.3 40.9 L48.3 57.7 L50.1 30.0 L52.0 42.9 L53.8 33.6 L55.4 40.0 L57.2 25.4 L58.9 35.2 L61.1 27.5 L63.0 52.6 L64.9 38.4 L67.1 49.5 L68.6 37.7 L70.5 58.7 L72.3 36.3 L73.7 58.3 L75.6 35.2 L77.2 54.1 L79.3 32.8 L81.0 51.5 L83.1 40.6 L85.1 55.2 L86.8 33.9 L88.9 46.4 L90.3 33.7 L91.8 58.2 L93.6 40.8 L95.1 65.5 L96.8 40.8 L98.6 54.5 L100.5 44.3 L102.4 58.7 L103.7 52.4 L105.7 57.3 L107.8 47.9 L109.4 70.2 L111.3 50.1 L112.6 72.2 L114.1 54.6 L115.4 77.8 L116.9 56.6 L118.5 81.1 L120.6 70.5 L122.0 94.0 L123.6 81.1 L125.0 97.0 L127.2 87.1 L129.0 110.9 L130.4 88.5 L131.9 102.6 L133.3 87.0 L135.5 107.5 L136.9 88.6 L138.3 103.6 L140.4 86.9 L142.4 102.6 L144.0 75.0 L146.0 104.2 L148.0 87.1 L149.5 106.6 L151.7 103.6 L153.7 112.6 L155.7 100.7 L157.4 123.5 L158.8 105.0 L160.3 128.4 L162.2 121.3 L163.9 125.7 L166.1 127.1 L167.8 140.0 L169.3 119.5 L170.7 138.2 L172.9 129.9 L174.5 139.0 L175.5 120.0 L176.5 142.0 L177.5 151.0 L178.5 136.0 L179.7 152.0 L180.8 139.0 L182.0 153.3 L201.5 153.3" fill="none" stroke="#f66464" stroke-width="0.85" stroke-linejoin="round"/></g>
<g transform="translate(2 2)"><path d="M3.2 140.5 L5.0 155.3 L6.7 141.4 L8.6 167.9 L10.3 142.9 L12.3 159.5 L13.9 128.0 L15.9 137.6 L17.3 133.7 L19.4 139.9 L21.3 116.8 L22.6 144.3 L24.0 113.9 L25.5 154.9 L27.2 121.3 L29.2 143.7 L31.1 127.0 L33.0 143.7 L34.6 136.3 L36.8 138.3 L38.7 120.0 L40.2 147.3 L41.6 125.6 L43.2 131.9 L44.9 125.8 L46.9 135.1 L48.4 116.7 L50.2 114.9 L51.8 95.6 L53.7 111.8 L55.2 93.3 L56.8 106.4 L58.8 91.3 L60.3 121.3 L61.7 109.7 L63.1 126.8 L64.8 113.2 L66.8 143.5 L68.7 115.8 L70.4 135.8 L71.9 124.0 L73.9 128.4 L76.0 113.4 L77.7 123.3 L79.6 113.1 L81.7 129.1 L83.3 117.3 L84.9 127.8 L86.2 107.8 L88.1 127.9 L89.9 105.0 L91.6 119.4 L93.3 110.0 L95.4 137.3 L96.9 121.5 L98.9 142.0 L100.4 123.7 L102.5 149.7 L104.7 138.6 L106.5 153.0 L107.9 131.5 L110.1 154.9 L112.0 133.3 L114.1 150.1 L115.6 140.3 L117.6 171.5 L119.1 158.5 L121.1 179.8 L122.7 175.2 L124.2 191.3 L125.7 170.9 L127.1 193.4 L128.7 174.8 L130.1 190.9 L132.2 180.7 L134.1 183.8 L135.9 164.5 L137.3 188.1 L139.4 165.7 L141.6 184.3 L143.4 166.4 L145.4 191.2 L147.6 174.0 L149.4 194.5 L151.5 187.3 L153.4 199.1 L155.5 187.8 L157.5 205.3 L159.5 196.5 L161.6 212.2 L163.4 203.6 L165.0 218.7 L166.9 202.8 L168.7 219.6 L170.8 217.6 L172.5 220.9 L173.5 233.0 L174.6 213.0 L176.0 191.0 L177.3 217.0 L178.4 213.0 L179.4 237.0 L180.3 241.5 L181.2 225.0 L182.0 219.8 L201.5 219.8" fill="none" stroke="#1464f0" stroke-width="0.85" stroke-linejoin="round"/></g>
<path d="M4.5 260V5.4H204.5V260Z" fill="none" stroke="#111" stroke-width="1"/>
<path d="M205 29.0h2.2M205 54.6h2.2M205 80.1h2.2M205 105.7h2.2M205 131.2h2.2M205 156.8h2.2M205 182.4h2.2M205 207.9h2.2M205 233.5h2.2M205 259.0h2.2" stroke="#1a1a1a" stroke-width="1"/>
<rect x="205" y="151.2" width="34.2" height="8.6" fill="#f66464"/>
<rect x="205" y="217.6" width="34.2" height="8.6" fill="#1464f0"/>
</svg>
<div class="ml" style="top:105.5px">1.08858</div>
<div class="ml" style="top:131.1px">1.08853</div>
<div class="ml" style="top:156.6px">1.08848</div>
<div class="ml" style="top:182.2px">1.08844</div>
<div class="ml" style="top:207.7px">1.08839</div>
<div class="ml" style="top:258.9px">1.08830</div>
<div class="ml" style="top:284.4px">1.08825</div>
<div class="ml" style="top:310.0px">1.08820</div>
<div class="ml" style="top:333.5px">1.08816</div>
<div class="ml w" style="top:231.8px">1.08835</div>
<div class="ml w" style="top:298.3px">1.08823</div>
<div class="ml" style="left:345px;top:87.4px;font-size:7.4px">EURUSD</div>
<div class="lab" style="left:506px;width:150px;top:85.0px">Instrument:</div>
<div class="lab" style="left:506px;width:150px;top:105.5px">Wolumen:</div>
<div class="lab" style="left:506px;width:150px;top:126.0px">Stop Loss:</div>
<div class="lab" style="left:506px;width:150px;top:147.0px">Komentarz:</div>
<div class="lab" style="left:506px;width:150px;top:168.0px">Typ:</div>
<div class="lab tp" style="left:680px;width:150px;top:126.0px">Take Profit:</div>
<div class="combo" style="left:663px;top:83px;width:258px;height:16px"><span>EURUSD, Euro vs US Dollar</span><svg class="dd" width="6" height="3.5" viewBox="0 0 6 3.5"><path d="M0 0H6L3 3.5Z" fill="#111"/></svg></div>
<div class="edit" style="left:663px;top:103px;width:84px;height:16px"><span style="left:4px">1.00</span><svg class="dd" width="6" height="3.5" viewBox="0 0 6 3.5"><path d="M0 0H6L3 3.5Z" fill="#111"/></svg></div>
<div class="edit" style="left:663px;top:124px;width:70px;height:16px"><span style="right:2.6px">0.00000</span></div><div style="position:absolute;left:732.8px;top:124.5px"><svg class="spin" width="13" height="15" viewBox="0 0 13 15"><rect x="0.5" y="0.5" width="12" height="14" fill="#f1f1f1" stroke="#cdcdcd"/><path d="M1 7.5H12" stroke="#d6d6d6"/><path d="M4 5.4L6.4 2.9L8.8 5.4Z" fill="#4a6ea8"/><path d="M4 9.6L6.4 12.1L8.8 9.6Z" fill="#4a6ea8"/></svg></div>
<div class="edit" style="left:836px;top:124px;width:71px;height:16px"><span style="right:2.6px">0.00000</span></div><div style="position:absolute;left:906.8px;top:124.5px"><svg class="spin" width="13" height="15" viewBox="0 0 13 15"><rect x="0.5" y="0.5" width="12" height="14" fill="#f1f1f1" stroke="#cdcdcd"/><path d="M1 7.5H12" stroke="#d6d6d6"/><path d="M4 5.4L6.4 2.9L8.8 5.4Z" fill="#4a6ea8"/><path d="M4 9.6L6.4 12.1L8.8 9.6Z" fill="#4a6ea8"/></svg></div>
<div class="edit" style="left:663px;top:145px;width:258px;height:16px"></div>
<div class="combo" style="left:663px;top:166px;width:258px;height:16px"><span>Egzekucja natychmiastowa</span><svg class="dd" width="6" height="3.5" viewBox="0 0 6 3.5"><path d="M0 0H6L3 3.5Z" fill="#111"/></svg></div>
<div id="grp"></div>
<div class="lab2" style="left:591.5px;top:189px">Egzekucja natychmiastowa</div>
<div class="pr big" style="left:671.2px;width:63px">1.0882</div>
<div class="pr sm" style="left:735px;width:9px">3</div>
<div class="pr big" style="left:750.8px;width:9px">/</div>
<div class="pr big" style="left:766.6px;width:63px">1.0883</div>
<div class="pr sm" style="left:830.4px;width:9px">5</div>
<div class="btn" style="left:597px;top:248px;width:149px;height:17px;"><div class="bi" style="background:#ff8080">Sprzedaj</div></div>
<div class="btn" style="left:765px;top:248px;width:149px;height:17px;"><div class="bi" style="background:#9fbcff">Kup</div></div>
<div class="btn dis" style="left:597px;top:271px;width:317px;height:17px;"><div class="bi" style="background:#f2f2f2"></div></div>
<div id="chk"></div>
<div class="lab2" style="left:608.3px;top:299.8px">Włącz maksymalne odchylenie od kwotowanej ceny</div>
<div class="lab" style="left:608px;width:150px;top:322.0px">Maksymalne odchylenie:</div>
<div class="edit disd" style="left:767px;top:319px;width:48px;height:17px"><span style="left:5px;color:#8a8a8a">0</span><svg class="dd" width="6" height="3.5" viewBox="0 0 6 3.5"><path d="M0 0H6L3 3.5Z" fill="#9a9a9a"/></svg></div>
<div class="lab2" style="left:819px;top:322px">punkty</div>
</div>
</div></body></html>
